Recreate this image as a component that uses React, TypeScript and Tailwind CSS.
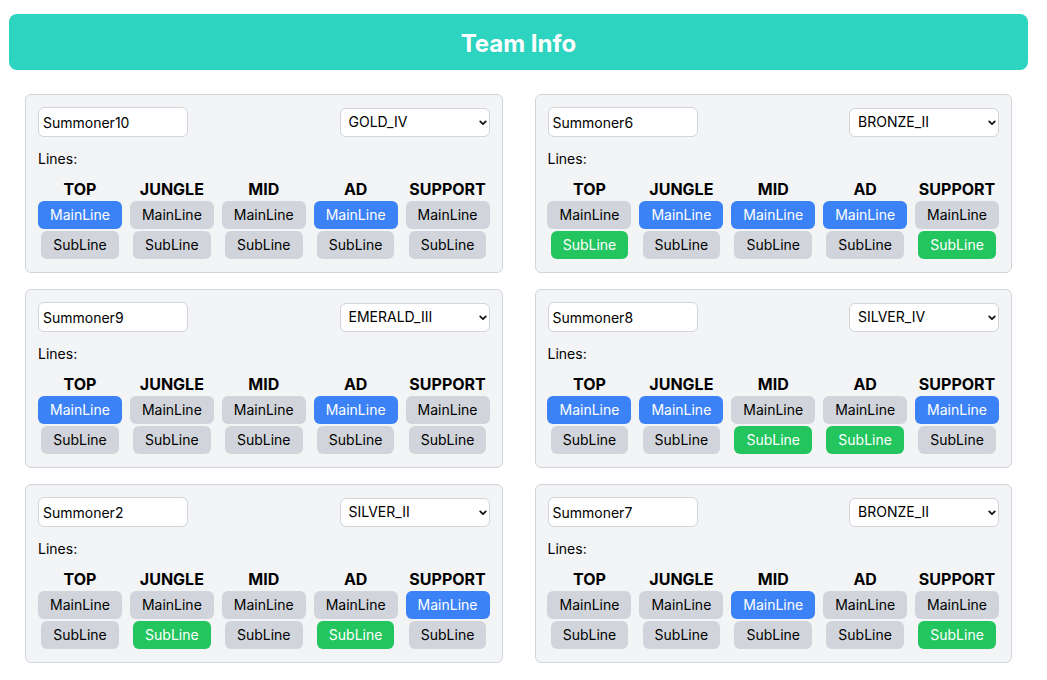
import { useState } from "react";

type Line = "TOP" | "JUNGLE" | "MID" | "AD" | "SUPPORT";

type Summoner = {
  name: string;
  tier: string;
  main: Line[];
  sub: Line[];
};

const LINES: Line[] = ["TOP", "JUNGLE", "MID", "AD", "SUPPORT"];

const TIERS = [
  "IRON_IV", "IRON_III", "IRON_II", "IRON_I",
  "BRONZE_IV", "BRONZE_III", "BRONZE_II", "BRONZE_I",
  "SILVER_IV", "SILVER_III", "SILVER_II", "SILVER_I",
  "GOLD_IV", "GOLD_III", "GOLD_II", "GOLD_I",
  "PLATINUM_IV", "PLATINUM_III", "PLATINUM_II", "PLATINUM_I",
  "EMERALD_IV", "EMERALD_III", "EMERALD_II", "EMERALD_I",
  "DIAMOND_IV", "DIAMOND_III", "DIAMOND_II", "DIAMOND_I",
];

const initialTeam: Summoner[] = [
  { name: "Summoner10", tier: "GOLD_IV", main: ["TOP", "AD"], sub: [] },
  { name: "Summoner6", tier: "BRONZE_II", main: ["JUNGLE", "MID", "AD"], sub: ["TOP", "SUPPORT"] },
  { name: "Summoner9", tier: "EMERALD_III", main: ["TOP", "AD"], sub: [] },
  { name: "Summoner8", tier: "SILVER_IV", main: ["TOP", "JUNGLE", "SUPPORT"], sub: ["MID", "AD"] },
  { name: "Summoner2", tier: "SILVER_II", main: ["SUPPORT"], sub: ["JUNGLE", "AD"] },
  { name: "Summoner7", tier: "BRONZE_II", main: ["MID"], sub: ["SUPPORT"] },
];

function SummonerCard({
  summoner,
  onChange,
}: {
  summoner: Summoner;
  onChange: (s: Summoner) => void;
}) {
  const toggle = (kind: "main" | "sub", line: Line) => {
    const list = summoner[kind];
    const next = list.includes(line) ? list.filter(l => l !== line) : [...list, line];
    onChange({ ...summoner, [kind]: next });
  };

  return (
    <div className="bg-[#f3f4f6] border border-[#d1d5db] rounded-md px-3 pt-3 pb-[13px]">
      <div className="flex items-center justify-between mb-3">
        <input
          value={summoner.name}
          onChange={e => onChange({ ...summoner, name: e.target.value })}
          className="w-[150px] h-[30px] bg-white border border-[#d1d5db] rounded-md px-1 text-sm text-black outline-none"
        />
        <div className="relative">
          <select
            value={summoner.tier}
            onChange={e => onChange({ ...summoner, tier: e.target.value })}
            className="appearance-none w-[150px] h-[29px] bg-white border border-[#d1d5db] rounded-md pl-2 pr-6 text-sm text-black outline-none"
          >
            {TIERS.map(t => (
              <option key={t} value={t}>
                {t}
              </option>
            ))}
          </select>
          {/* chevron */}
          <svg
            className="absolute right-[3px] top-[12px] pointer-events-none"
            width="8"
            height="6"
            viewBox="0 0 8 6"
          >
            <path d="M1.2 1.3 L4 4.2 L6.8 1.3" fill="none" stroke="#111" strokeWidth="1.7" strokeLinecap="round" strokeLinejoin="round" />
          </svg>
        </div>
      </div>
      <div className="text-sm leading-5 text-black mb-2">Lines:</div>
      <div className="grid grid-cols-5 gap-x-2">
        {LINES.map(line => {
          const isMain = summoner.main.includes(line);
          const isSub = summoner.sub.includes(line);
          return (
            <div key={line} className="flex flex-col items-center">
              <div className="h-6 leading-6 font-bold text-base text-black">{line}</div>
              <button
                onClick={() => toggle("main", line)}
                className={`h-7 px-3 rounded-md text-sm ${isMain ? "bg-[#3b82f6] text-white" : "bg-[#d1d5db] text-black"}`}
              >
                MainLine
              </button>
              <button
                onClick={() => toggle("sub", line)}
                className={`mt-[2px] h-7 px-3 rounded-md text-sm ${isSub ? "bg-[#22c55e] text-white" : "bg-[#d1d5db] text-black"}`}
              >
                SubLine
              </button>
            </div>
          );
        })}
      </div>
    </div>
  );
}

export default function App() {
  const [team, setTeam] = useState<Summoner[]>(initialTeam);

  return (
    <div className="min-h-screen bg-white pt-[14px] pl-[9px] pr-[19px] font-['Inter',sans-serif]">
      <div className="h-14 bg-[#2dd4bf] rounded-lg flex items-center justify-center pt-[3px]">
        <h1 className="text-2xl font-bold text-white">Team Info</h1>
      </div>
      <div className="mt-6 px-4 grid grid-cols-2 gap-x-8 gap-y-4">
        {team.map((s, i) => (
          <SummonerCard
            key={i}
            summoner={s}
            onChange={next => setTeam(team.map((t, j) => (j === i ? next : t)))}
          />
        ))}
      </div>
    </div>
  );
}
